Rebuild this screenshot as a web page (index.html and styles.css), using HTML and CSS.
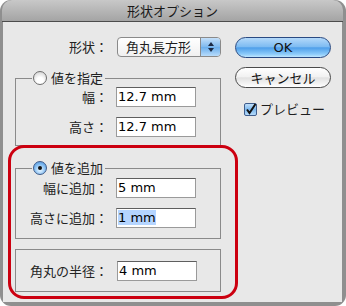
FILE: index.html
```html
<!DOCTYPE html>
<html lang="ja">
<head>
    <meta charset="UTF-8">
    <title>形状オプション</title>
    <link rel="stylesheet" href="styles.css">
</head>
<body>
    <div class="window">
        <div class="titlebar">形状オプション</div>
        <div class="content">
            <div class="left">
                <div class="row top">
                    <span class="lbl">形状：</span>
                    <div class="select">
                        <span class="select-text">角丸長方形</span>
                        <span class="stepper">
                            <svg width="8" height="12" viewBox="0 0 8 12">
                                <path d="M4 1 L7 5 L1 5 Z" fill="#1c2a44"/>
                                <path d="M4 11 L7 7 L1 7 Z" fill="#1c2a44"/>
                            </svg>
                        </span>
                    </div>
                </div>

                <fieldset class="group g1">
                    <legend><span class="radio"></span>値を指定</legend>
                    <div class="row">
                        <span class="lbl">幅：</span>
                        <div class="input">12.7 mm</div>
                    </div>
                    <div class="row">
                        <span class="lbl">高さ：</span>
                        <div class="input">12.7 mm</div>
                    </div>
                </fieldset>

                <div class="highlight">
                    <fieldset class="group g2">
                        <legend><span class="radio on"></span>値を追加</legend>
                        <div class="row">
                            <span class="lbl">幅に追加：</span>
                            <div class="input">5 mm</div>
                        </div>
                        <div class="row">
                            <span class="lbl">高さに追加：</span>
                            <div class="input"><span class="selected">1 mm</span></div>
                        </div>
                    </fieldset>
                    <div class="group g3">
                        <div class="row">
                            <span class="lbl">角丸の半径：</span>
                            <div class="input">4 mm</div>
                        </div>
                    </div>
                </div>
            </div>

            <div class="right">
                <button class="btn ok">OK</button>
                <button class="btn cancel">キャンセル</button>
                <label class="check">
                    <svg class="box" width="13" height="13" viewBox="0 0 13 13">
                        <defs>
                            <linearGradient id="cb" x1="0" y1="0" x2="0" y2="1">
                                <stop offset="0" stop-color="#c6e2fb"/>
                                <stop offset="0.5" stop-color="#7cb8ee"/>
                                <stop offset="1" stop-color="#b9ddfb"/>
                            </linearGradient>
                        </defs>
                        <rect x="0.5" y="0.5" width="12" height="12" rx="1.5" fill="url(#cb)" stroke="#3f5d8c"/>
                        <path d="M3 6.5 L5.5 10 L11.5 1" fill="none" stroke="#111" stroke-width="2"/>
                    </svg>
                    <span>プレビュー</span>
                </label>
            </div>
        </div>
    </div>
</body>
</html>
```

FILE: styles.css
```css
body {
    margin: 0;
    background-color: #fff;
    font-family: "Noto Sans CJK JP", "DejaVu Sans", sans-serif;
    font-size: 13px;
    color: #1e1e1e;
}
.window {
    width: 346px;
    height: 306px;
    box-sizing: border-box;
    padding: 0 4px 4px 3px;
    background-color: #8f8f8f;
    border-radius: 11px;
    display: flex;
    flex-direction: column;
}
.titlebar {
    height: 21px;
    line-height: 21px;
    text-align: center;
    margin: 0 -1px 0 -1px;
    background: linear-gradient(#c8c8c8, #a4a4a4);
    border-radius: 10px 10px 0 0;
    border-bottom: 1px solid #4c4c4c;
    color: #1a1a1a;
}
.content {
    flex: 1;
    display: flex;
    background-color: #e8e8e8;
}
.left {
    width: 235px;
    flex: none;
    padding-top: 15px;
}
.row {
    display: flex;
    align-items: center;
    height: 20px;
}
.row + .row {
    margin-top: 10px;
}
.lbl {
    width: 92px;
    text-align: right;
    line-height: 20px;
    white-space: nowrap;
    color: #222;
}
.top .lbl {
    width: 105px;
}
.select {
    margin-left: 9px;
    width: 104px;
    height: 20px;
    box-sizing: border-box;
    display: flex;
    border: 1px solid #8a8a8a;
    border-radius: 4px;
    background: linear-gradient(#ffffff, #f0f0f0);
    overflow: hidden;
}
.select-text {
    flex: 1;
    padding-left: 8px;
    line-height: 18px;
}
.stepper {
    width: 19px;
    display: flex;
    align-items: center;
    justify-content: center;
    border-left: 1px solid #8a8a8a;
    background: linear-gradient(#c4e0fa, #7db8ee 50%, #6aaeec 51%, #b8dcfb);
}
.group {
    margin: 0 0 0 12px;
    width: 206px;
    box-sizing: border-box;
    border: 1px solid #8a8a8a;
    padding: 1px 0 8px 0;
    min-width: 0;
}
.g1 {
    margin-top: 13px;
}
.group legend {
    margin-left: 16px;
    padding: 0 2px 0 1px;
    line-height: 16px;
    display: flex;
    align-items: center;
}
.radio {
    width: 14px;
    height: 14px;
    box-sizing: border-box;
    border-radius: 50%;
    border: 1px solid #6e6e6e;
    background: radial-gradient(circle at 50% 70%, #ffffff 30%, #dcdcdc 75%, #bdbdbd);
    margin-right: 4px;
    position: relative;
}
.radio.on {
    border-color: #3d5a88;
    background: radial-gradient(circle at 50% 65%, #d4ecff 15%, #7ab6ee 60%, #4d8fd6);
}
.radio.on::after {
    content: "";
    position: absolute;
    left: 4px;
    top: 4px;
    width: 4px;
    height: 4px;
    border-radius: 50%;
    background-color: #111;
}
.input {
    margin-left: 8px;
    width: 80px;
    height: 20px;
    box-sizing: border-box;
    border: 1px solid #9a9a9a;
    border-top-color: #5e5e5e;
    background-color: #fff;
    padding-left: 1px;
    font-family: "DejaVu Sans", sans-serif;
    font-size: 13px;
    line-height: 18px;
    color: #000;
    white-space: nowrap;
}
.selected {
    background-color: #b5d5ff;
}
.highlight {
    margin: -1px 0 0 5px;
    width: 230px;
    box-sizing: border-box;
    border: 3px solid #cc0010;
    border-radius: 16px;
    padding: 12px 14px 4px 4px;
}
.highlight .group {
    margin-left: 0;
}
.g2 {
    padding-top: 2px;
    padding-bottom: 10px;
}
.g3 {
    margin-top: 10px;
    padding: 11px 0 10px 0;
}
.g3 .input {
    margin-left: 9px;
}
.right {
    margin-left: -3px;
    padding-top: 15px;
    display: flex;
    flex-direction: column;
}
.btn {
    width: 96px;
    height: 21px;
    border-radius: 11px;
    font-size: 13px;
    padding: 0;
    line-height: 19px;
    color: #111;
}
.ok {
    font-family: "DejaVu Sans", sans-serif;
    border: 1px solid #2a4a82;
    background: linear-gradient(#b4d9fa, #7fbcf2 45%, #4f9fea 52%, #8ccbfa 85%, #bfe6ff);
}
.cancel {
    margin-top: 9px;
    font-family: "Noto Sans CJK JP", sans-serif;
    border: 1px solid #4a4a4a;
    background: linear-gradient(#ffffff, #f2f2f2 45%, #e2e2e2 52%, #f5f5f5 85%, #ffffff);
}
.check {
    margin: 14px 0 0 9px;
    display: flex;
    align-items: center;
    line-height: 14px;
}
.check .box {
    margin-right: 3px;
}
```
